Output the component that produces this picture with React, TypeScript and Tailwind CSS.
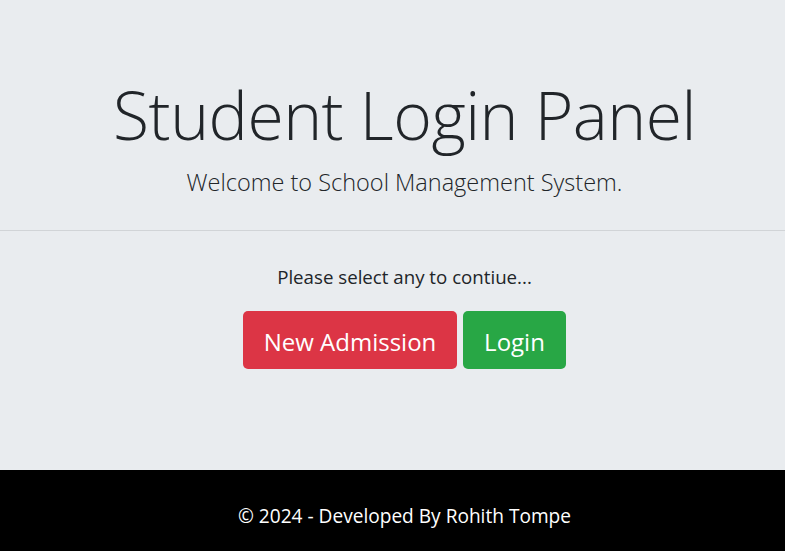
export default function App() {
  return (
    <div className="w-[785px] h-[551px] flex flex-col text-[#212529]" style={{ fontFamily: '"Open Sans", "Noto Sans", sans-serif' }}>
      <main className="h-[470px] bg-[#e9ecef] flex flex-col text-center">
        <div className="pl-[24px] flex flex-col items-center">
          <h1 className="mt-[71px] text-[66px] leading-[86px] font-light tracking-[-0.5px] whitespace-nowrap">Student Login Panel</h1>
          <p className="mt-[7px] text-[23.5px] leading-[36px] font-light">Welcome to School Management System.</p>
        </div>
        <hr className="mt-[30px] w-full border-0 border-t border-[#d1d4d7]" />
        <div className="pl-[24px] flex flex-col items-center">
          <p className="mt-[32px] text-[18.7px] leading-[27px]">Please select any to contiue...</p>
          <div className="mt-[21px] flex gap-[6px]">
            <button className="h-[58px] w-[214px] rounded-[5px] bg-[#dc3545] text-white text-[24px] pt-[3px]">New Admission</button>
            <button className="h-[58px] w-[103px] rounded-[5px] bg-[#28a745] text-white text-[24px] pt-[3px]">Login</button>
          </div>
        </div>
      </main>
      <footer className="h-[81px] bg-black flex items-center justify-center pt-[12px] pl-[24px]">
        <span className="text-white text-[19.1px]">© 2024 - Developed By Rohith Tompe</span>
      </footer>
    </div>
  );
}
